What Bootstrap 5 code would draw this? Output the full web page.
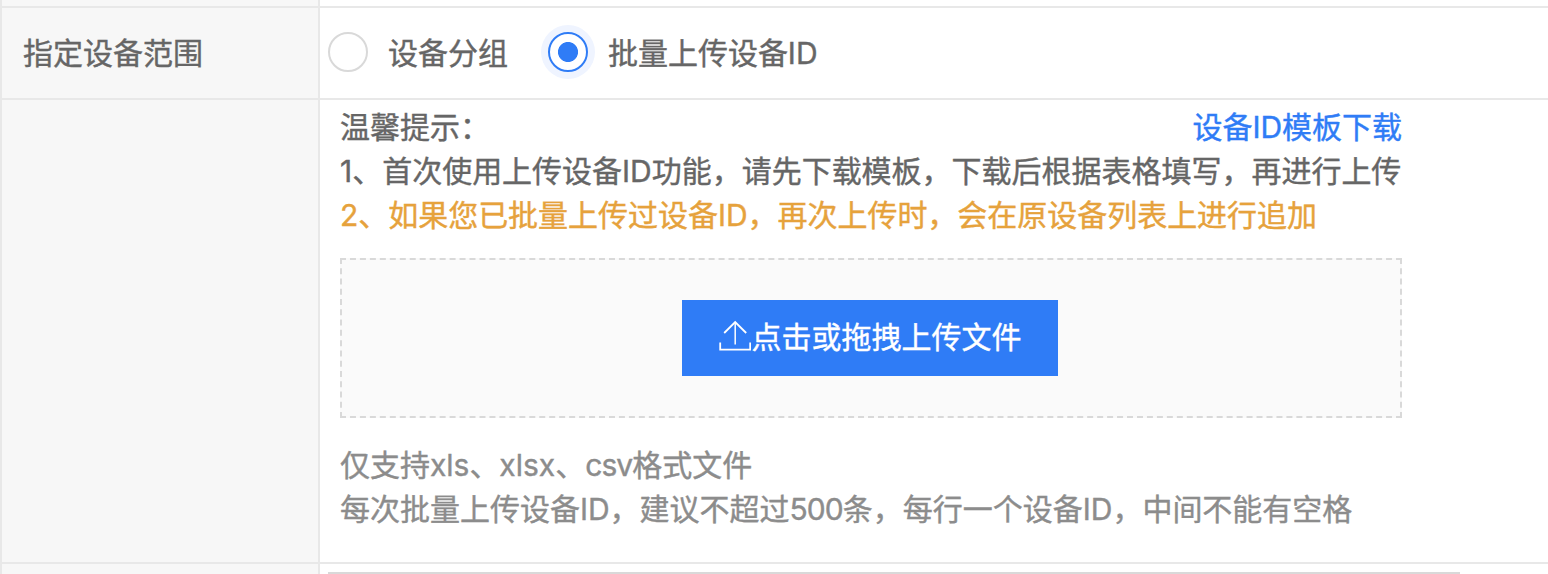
<!DOCTYPE html>
<html lang="zh-CN">
<head>
<meta charset="utf-8">
<meta name="viewport" content="width=device-width, initial-scale=1">
<title>指定设备范围</title>
<link href="https://cdn.jsdelivr.net/npm/bootstrap@5.3.0/dist/css/bootstrap.min.css" rel="stylesheet">
<style>
body{font-family:Inter,"Noto Sans CJK SC",sans-serif;font-size:30px;line-height:44px;letter-spacing:-.015px;color:#666;background:#fff;height:574px;overflow:hidden;-webkit-text-stroke:.4px currentColor}
.form-grid{height:574px;border-left:2px solid #e8e8e8}
.line{border-bottom:2px solid #e8e8e8}
.label-cell{width:318px;background:#f7f7f7;border-right:2px solid #e8e8e8;padding-left:21px}
.r-top{height:8px}.r-scope{height:92px}.r-upload{height:464px}.r-next{height:10px}
.options{padding-bottom:2px}
.scope-radio{width:40px;height:40px;margin:0;border:2px solid #d9d9d9;float:none}
.scope-radio:checked{background:radial-gradient(circle,#2f7cf6 9.6px,#fff 10.4px);border-color:#2f7cf6;box-shadow:0 0 0 7px #eff4ff}
.option-text{margin-left:20px;padding-top:2px}
.second{margin-left:40px}
.content-cell{padding:5px 0 0 20px}
.upload-panel{width:1062px}
.tpl-link{color:#2f7cf6}
.warn{color:#e6a23c;letter-spacing:-.03px}
.hint{color:#8c8c8c;margin-top:25px}
.tight{letter-spacing:-.9px}
.drop{height:160px;margin-top:21px;padding-right:2px;background:#fafafa;border:2px dashed #d9d9d9}
.btn-upload{width:376px;height:76px;background:#2f7cf6;color:#fff;font-size:30px;line-height:44px;padding:0 0 2px}
.btn-upload svg{margin:0 1px 2px 0}
.next-box{width:1132px;height:2px;margin:8px 0 0 8px;background:#d9d9d9}
</style>
</head>
<body>
<main class="form-grid d-flex flex-column">
  <div class="d-flex line r-top"><div class="label-cell"></div></div>
  <div class="d-flex line r-scope">
    <div class="label-cell d-flex align-items-center"><span>指定设备范围</span></div>
    <div class="options d-flex align-items-center ps-2">
      <label class="d-flex align-items-center"><input class="form-check-input scope-radio" type="radio" name="scope"><span class="option-text">设备分组</span></label>
      <label class="d-flex align-items-center second"><input class="form-check-input scope-radio" type="radio" name="scope" checked><span class="option-text">批量上传设备ID</span></label>
    </div>
  </div>
  <div class="d-flex line r-upload">
    <div class="label-cell"></div>
    <div class="content-cell">
      <div class="upload-panel text-nowrap">
        <div class="d-flex justify-content-between"><span>温馨提示：</span><a class="tpl-link text-decoration-none" href="#">设备ID模板下载</a></div>
        <div><span>1、首次使用上传设备ID功能，请先下载模板，下载后根据表格填写，再进行上传</span></div>
        <div class="warn"><span>2、如果您已批量上传过设备ID，再次上传时，会在原设备列表上进行追加</span></div>
        <div class="drop d-flex align-items-center justify-content-center">
          <button type="button" class="btn btn-upload rounded-0 border-0 d-flex align-items-center justify-content-center">
            <svg width="32" height="32" viewBox="0 0 32 32" fill="none" stroke="#fff" stroke-width="1.8"><path d="M1.2 22.5v7.2h30v-7.2M5.2 13 16.2 2l11 11"/><path d="M16.2 24.5v-22" stroke-width="1.5"/></svg><span>点击或拖拽上传文件</span>
          </button>
        </div>
        <div class="hint">
          <div>仅支持xls、xlsx、<span class="tight">csv</span>格式文件</div>
          <div>每次批量上传设备ID，建议不超过<span class="tight">500</span>条，每行一个设备ID，中间不能有空格</div>
        </div>
      </div>
    </div>
  </div>
  <div class="d-flex r-next"><div class="label-cell"></div><div class="next-box"></div></div>
</main>
<script src="https://cdn.jsdelivr.net/npm/bootstrap@5.3.0/dist/js/bootstrap.bundle.min.js"></script>
</body>
</html>
